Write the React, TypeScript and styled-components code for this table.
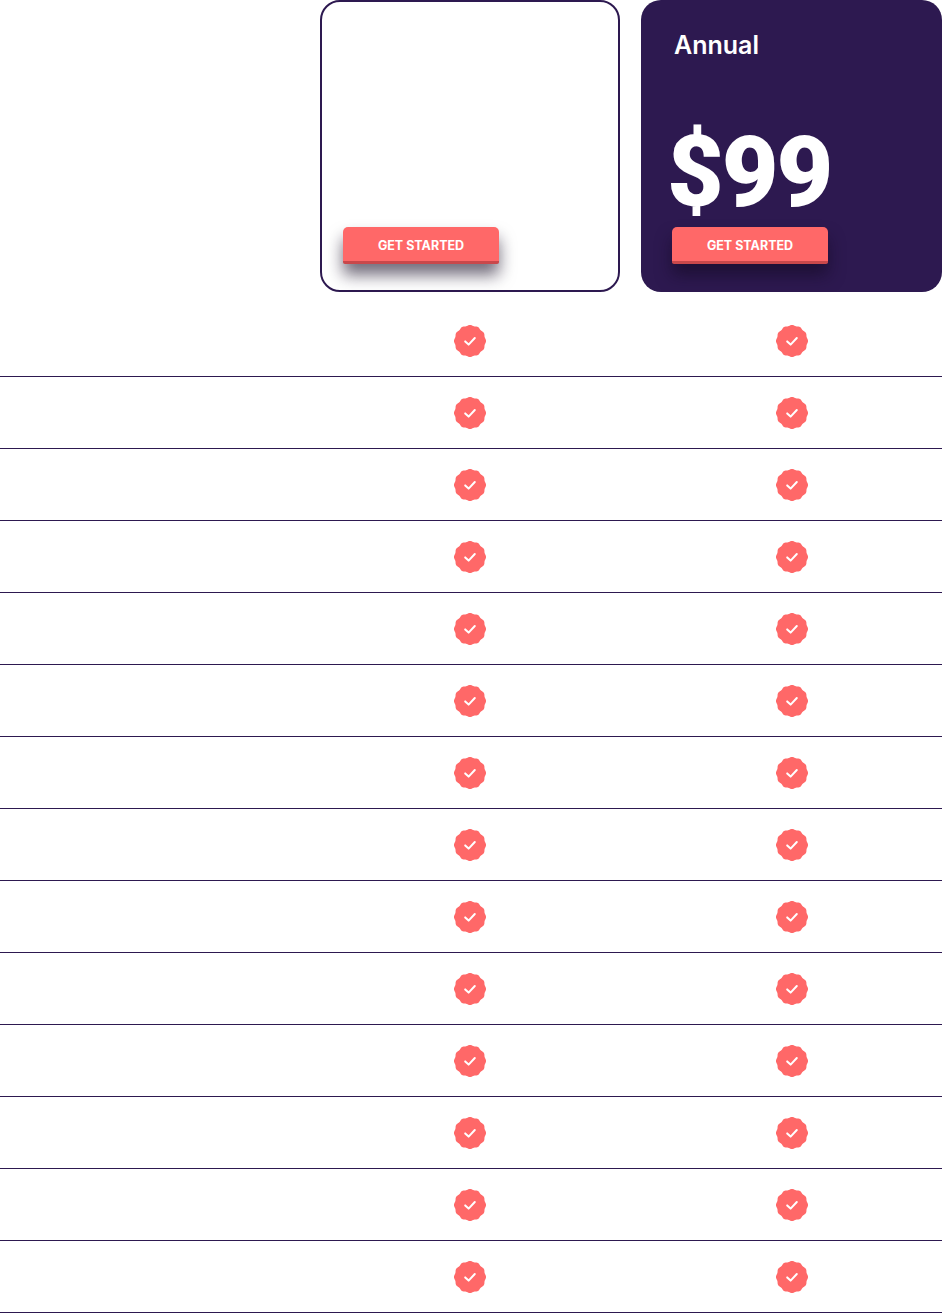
import React from 'react';
import styled, { createGlobalStyle } from 'styled-components';

const GlobalStyle = createGlobalStyle`
  body {
    margin: 0;
    background: #ffffff;
    font-family: Inter, "Noto Sans", sans-serif;
  }
`;

const PURPLE = '#2d1950';
const CORAL = '#ff6868';

const Table = styled.div`
  width: 942px;
`;

const Columns = styled.div`
  display: grid;
  grid-template-columns: 299px 300px 301px;
  column-gap: 21px;
`;

const Header = styled(Columns)`
  height: 292px;
  margin-bottom: 13px;
`;

const PlanCard = styled.div<{ $featured?: boolean }>`
  box-sizing: border-box;
  border-radius: 20px;
  display: flex;
  flex-direction: column;
  padding: ${(p) => (p.$featured ? '28px 31px 28px 31px' : '0 23px 26px 21px')};
  background: ${(p) => (p.$featured ? PURPLE : '#ffffff')};
  border: ${(p) => (p.$featured ? 'none' : `2px solid ${PURPLE}`)};
`;

const PlanName = styled.div`
  color: #ffffff;
  font-size: 25px;
  font-weight: 600;
  line-height: 34px;
  padding-left: 2px;
`;

const Price = styled.div`
  margin-top: auto;
  color: #ffffff;
  font-family: Roboto, "Noto Sans", sans-serif;
  font-size: 98px;
  font-weight: 900;
  line-height: 80px;
  letter-spacing: -2px;
  margin-left: -5px;
  margin-bottom: 14px;
`;

const StartButton = styled.button<{ $pushed?: boolean }>`
  margin-top: ${(p) => (p.$pushed ? 'auto' : '0')};
  width: 156px;
  height: 37px;
  border: none;
  border-bottom: 3px solid #c9484b;
  border-radius: 5px 5px 2px 2px;
  background: ${CORAL};
  color: #ffffff;
  font-family: Inter, "Noto Sans", sans-serif;
  font-size: 12.5px;
  font-weight: 700;
  letter-spacing: 0;
  padding: 2px 0 0 0;
  box-shadow: 0 11px 16px rgba(20, 10, 35, 0.6);
  cursor: pointer;
`;

const Row = styled(Columns)`
  box-sizing: border-box;
  height: 72px;
  border-bottom: 1px solid ${PURPLE};
  align-items: center;
`;

const Cell = styled.div`
  display: flex;
  justify-content: center;
  padding-top: 1px;
`;

const badgePath = (() => {
  const pts: string[] = [];
  const n = 120;
  for (let i = 0; i <= n; i++) {
    const a = (i / n) * Math.PI * 2;
    const r = 15.6 + 0.45 * Math.cos(a * 12);
    pts.push(`${(16 + r * Math.cos(a)).toFixed(2)},${(16 + r * Math.sin(a)).toFixed(2)}`);
  }
  return `M${pts.join('L')}Z`;
})();

const CheckBadge = () => (
  <svg width="32" height="32" viewBox="0 0 32 32">
    <path d={badgePath} fill={CORAL} />
    <polyline
      points="11.2,16.4 14.6,19.6 20.8,13"
      fill="none"
      stroke="#ffffff"
      strokeWidth="2"
      strokeLinecap="round"
      strokeLinejoin="round"
    />
  </svg>
);

const rows = Array.from({ length: 14 }, (_, i) => i);

export default function App() {
  return (
    <>
      <GlobalStyle />
      <Table>
        <Header>
          <div />
          <PlanCard>
            <StartButton $pushed>GET STARTED</StartButton>
          </PlanCard>
          <PlanCard $featured>
            <PlanName>Annual</PlanName>
            <Price>$99</Price>
            <StartButton>GET STARTED</StartButton>
          </PlanCard>
        </Header>
        {rows.map((r) => (
          <Row key={r}>
            <div />
            <Cell>
              <CheckBadge />
            </Cell>
            <Cell>
              <CheckBadge />
            </Cell>
          </Row>
        ))}
      </Table>
    </>
  );
}
